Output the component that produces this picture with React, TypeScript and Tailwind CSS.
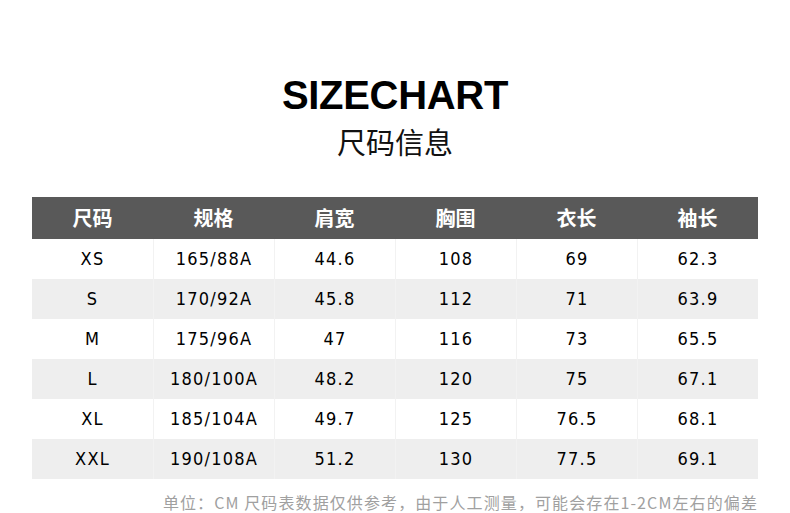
const headers = ['尺码', '规格', '肩宽', '胸围', '衣长', '袖长'];

const rows = [
  ['XS', '165/88A', '44.6', '108', '69', '62.3'],
  ['S', '170/92A', '45.8', '112', '71', '63.9'],
  ['M', '175/96A', '47', '116', '73', '65.5'],
  ['L', '180/100A', '48.2', '120', '75', '67.1'],
  ['XL', '185/104A', '49.7', '125', '76.5', '68.1'],
  ['XXL', '190/108A', '51.2', '130', '77.5', '69.1'],
];

export default function App() {
  return (
    <div className="w-[790px] h-[513px] bg-white overflow-hidden font-['Liberation_Sans','Noto_Sans_CJK_SC',sans-serif]">
      <div className="pt-[75px] flex flex-col items-center">
        <h1 className="text-[40px] leading-[40px] font-bold text-black tracking-[-0.3px]">SIZECHART</h1>
        <p className="mt-[8px] text-[29px] leading-[36px] text-[#111] font-['Noto_Sans_CJK_SC',sans-serif]">尺码信息</p>
      </div>

      <div className="mx-[32px] mt-[38px]">
        <div className="grid grid-cols-6 h-[42px] bg-[#595959]">
          {headers.map((h) => (
            <div
              key={h}
              className="flex items-center justify-center text-white text-[20px] font-bold font-['Noto_Sans_CJK_SC',sans-serif]"
            >
              {h}
            </div>
          ))}
        </div>
        {rows.map((r, i) => (
          <div key={r[0]} className={`grid grid-cols-6 h-[40px] ${i % 2 === 1 ? 'bg-[#eeeeee]' : 'bg-white'}`}>
            {r.map((c, j) => (
              <div
                key={j}
                className={`flex items-center justify-center pb-[2px] text-[18px] tracking-[1.2px] text-black font-['DejaVu_Sans_Condensed','Liberation_Sans',sans-serif] ${j > 0 ? 'border-l border-[#f2f2f2]' : ''}`}
              >
                {c}
              </div>
            ))}
          </div>
        ))}
      </div>

      <p className="mr-[32px] mt-[14px] text-right text-[16px] leading-[18px] text-[#a0a0a0] tracking-[1.1px] font-['Noto_Sans_CJK_SC',sans-serif]">
        单位：CM 尺码表数据仅供参考，由于人工测量，可能会存在1-2CM左右的偏差
      </p>
    </div>
  );
}
